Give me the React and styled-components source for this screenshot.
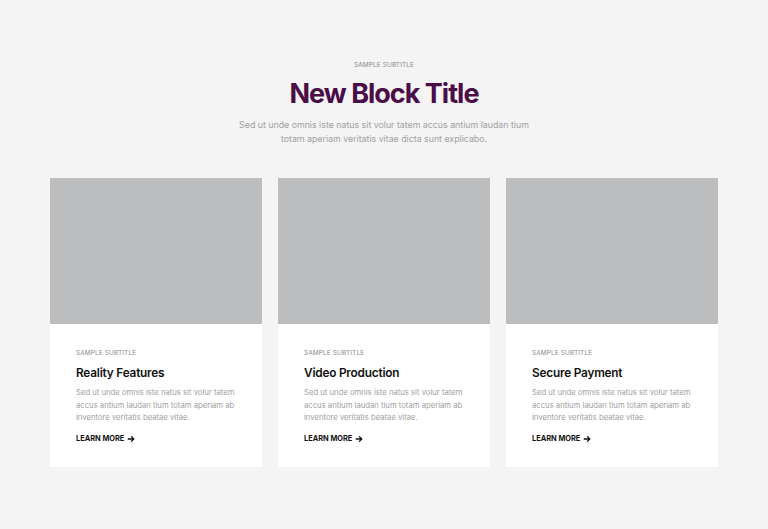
import React from "react"
import styled, { createGlobalStyle } from "styled-components"

const GlobalStyle = createGlobalStyle`
  html, body {
    margin: 0;
    padding: 0;
    background: #f4f4f4;
  }
  body {
    font-family: "Inter", "Noto Sans", sans-serif;
  }
`

const cards = [
  { title: "Reality Features" },
  { title: "Video Production" },
  { title: "Secure Payment" },
]

const Section = styled.section`
  width: 768px;
  min-height: 529px;
  box-sizing: border-box;
  padding: 61px 50px 0;
  display: flex;
  flex-direction: column;
  align-items: center;
`

const Subtitle = styled.p`
  margin: 0;
  font-size: 6.5px;
  letter-spacing: 0.1px;
  text-transform: uppercase;
  color: #8a8a8a;
  line-height: 9px;
`

const Title = styled.h2`
  margin: 7px 0 0;
  font-size: 27px;
  font-weight: 700;
  letter-spacing: -1px;
  line-height: 34px;
  color: #4a0d47;
`

const Lead = styled.p`
  margin: 7px 0 0;
  width: 310px;
  text-align: center;
  font-size: 8.8px;
  line-height: 14px;
  color: #a0a0a0;
`

const Grid = styled.div`
  margin-top: 32px;
  width: 100%;
  display: grid;
  grid-template-columns: repeat(3, 1fr);
  gap: 16px;
`

const Card = styled.article`
  background: #ffffff;
  display: flex;
  flex-direction: column;
`

const Media = styled.div`
  height: 146px;
  background: #bcbdbf;
`

const Body = styled.div`
  padding: 25px 26px 22px;
`

const CardTitle = styled.h3`
  margin: 8px 0 0;
  font-size: 11.8px;
  font-weight: 600;
  letter-spacing: -0.2px;
  line-height: 15px;
  color: #111111;
`

const Text = styled.p`
  margin: 6px 0 0;
  font-size: 7.7px;
  line-height: 12.5px;
  color: #a0a0a0;
`

const More = styled.a`
  margin-top: 8px;
  display: inline-flex;
  align-items: center;
  gap: 3px;
  font-size: 7.4px;
  font-weight: 700;
  color: #111111;
  text-decoration: none;
  text-transform: uppercase;
  line-height: 10px;
`

export default function App() {
  return (
    <>
      <GlobalStyle />
      <Section>
        <Subtitle>Sample Subtitle</Subtitle>
        <Title>New Block Title</Title>
        <Lead>
          Sed ut unde omnis iste natus sit volur tatem accus antium laudan tium totam aperiam veritatis vitae dicta sunt explicabo.
        </Lead>
        <Grid>
          {cards.map((c, i) => (
            <Card key={i}>
              <Media />
              <Body>
                <Subtitle>Sample Subtitle</Subtitle>
                <CardTitle>{c.title}</CardTitle>
                <Text>
                  Sed ut unde omnis iste natus sit volur tatem accus antium laudan tium totam aperiam ab inventore veritatis beatae vitae.
                </Text>
                <More href="#">
                  Learn More
                  <svg width="8" height="8" viewBox="0 0 10 10" fill="none" stroke="#111" strokeWidth="1.6" strokeLinecap="round" strokeLinejoin="round">
                    <path d="M1.5 5h7M5.5 2l3 3-3 3" />
                  </svg>
                </More>
              </Body>
            </Card>
          ))}
        </Grid>
      </Section>
    </>
  )
}
